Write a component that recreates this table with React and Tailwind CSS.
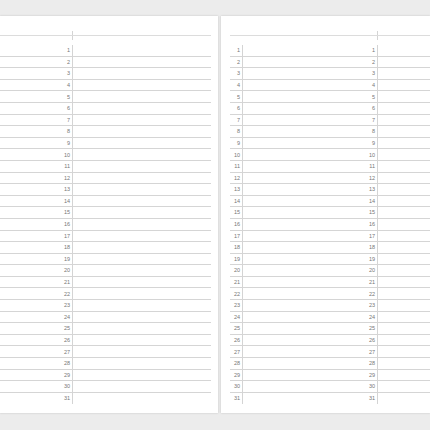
const rows = Array.from({ length: 31 }, (_, i) => i + 1);

// Left sheet: one number column, ruled to the right edge
function LeftPage() {
  return (
    <div className="w-[218px] h-[397px] bg-white shadow-[0_0_2px_rgba(0,0,0,0.18)] pr-[7px]">
      <div className="h-[20px] border-b border-[#dcdcdc] flex items-end">
        <div className="w-[73px] h-[4px] border-r border-[#d4d4d4]" />
      </div>
      <div className="h-[4px] flex">
        <div className="w-[73px] border-r border-[#d4d4d4]" />
      </div>
      <div className="h-[5px]" />
      {rows.map((n) => (
        <div
          key={n}
          className={
            "h-[11.6px] flex " + (n < 31 ? "border-b border-[#d5d5d5]" : "")
          }
        >
          <div className="w-[73px] border-r border-[#d4d4d4] flex items-center justify-end pr-[2px] text-[5.5px] text-[#777]">
            {n}
          </div>
        </div>
      ))}
    </div>
  );
}

// Right sheet: numbers on the left and again before the second rule
function RightPage() {
  return (
    <div className="flex-1 h-[397px] bg-white shadow-[0_0_2px_rgba(0,0,0,0.18)] pl-[9px]">
      <div className="h-[20px] border-b border-[#dcdcdc] flex items-end">
        <div className="w-[148px] h-[4px] border-r border-[#d4d4d4]" />
      </div>
      <div className="h-[4px] flex">
        <div className="w-[148px] border-r border-[#d4d4d4]" />
      </div>
      <div className="h-[5px]" />
      {rows.map((n) => (
        <div
          key={n}
          className={
            "h-[11.6px] flex " + (n < 31 ? "border-b border-[#d5d5d5]" : "")
          }
        >
          <div className="w-[13px] border-r border-[#d4d4d4] flex items-center justify-end pr-[2px] text-[5.5px] text-[#777]">
            {n}
          </div>
          <div className="w-[135px] border-r border-[#d4d4d4] flex items-center justify-end pr-[2px] text-[5.5px] text-[#777]">
            {n}
          </div>
        </div>
      ))}
    </div>
  );
}

export default function App() {
  return (
    <div
      className="w-[430px] h-[430px] bg-[#ececec] pt-[16px] overflow-hidden"
      style={{ fontFamily: '"Liberation Sans", Arial, sans-serif' }}
    >
      <div className="flex gap-[3px]">
        <LeftPage />
        <RightPage />
      </div>
    </div>
  );
}
